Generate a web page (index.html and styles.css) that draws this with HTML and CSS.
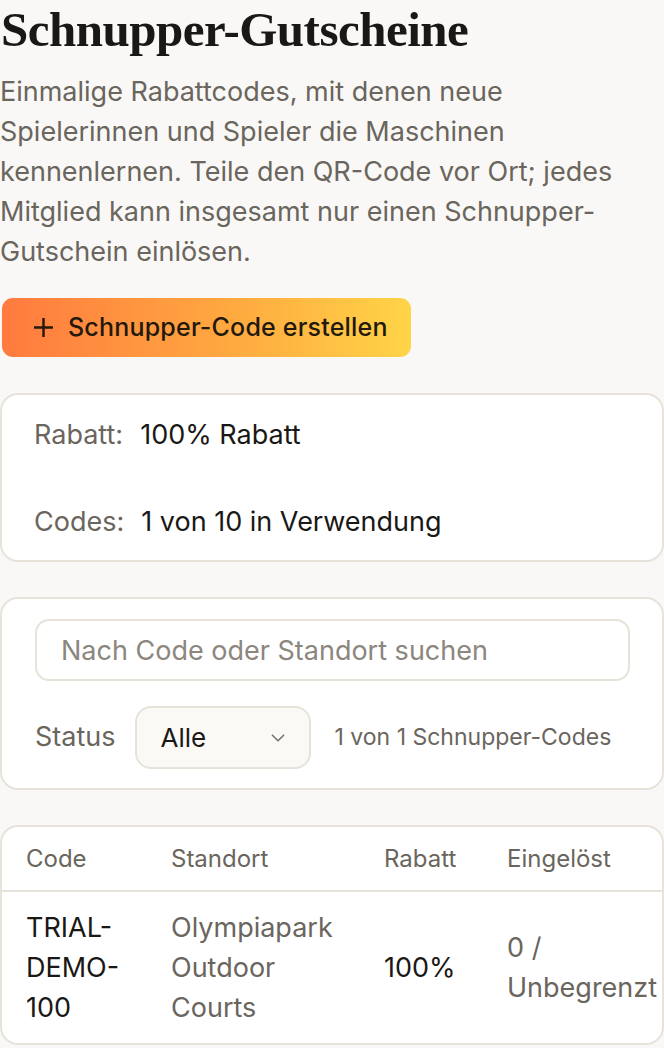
FILE: index.html
```html
<!DOCTYPE html>
<html lang="de">
  <head>
    <meta charset="UTF-8" />
    <meta name="viewport" content="width=device-width, initial-scale=1.0" />
    <title>Schnupper-Gutscheine</title>
    <link rel="stylesheet" href="styles.css">
  </head>
  <body>
    <main class="page">
      <header class="intro">
        <h1 class="intro__title">Schnupper-Gutscheine</h1>
        <p class="intro__text">
          Einmalige Rabattcodes, mit denen neue Spielerinnen und Spieler die Maschinen
          kennenlernen. Teile den QR-Code vor Ort; jedes Mitglied kann insgesamt nur einen
          Schnupper-Gutschein einlösen.
        </p>
      </header>

      <div class="actions">
        <button class="btn-create" type="button">
          <svg class="btn-create__icon" viewBox="0 0 20 20" width="21" height="21">
            <path d="M10 1v18M1 10h18" fill="none" stroke="currentColor" stroke-width="2.3" />
          </svg>
          Schnupper-Code erstellen
        </button>
      </div>

      <section class="card summary">
        <div class="summary__row">
          <span class="summary__label">Rabatt:</span>
          <span class="summary__value">100% Rabatt</span>
        </div>
        <div class="summary__row">
          <span class="summary__label">Codes:</span>
          <span class="summary__value">1 von 10 in Verwendung</span>
        </div>
      </section>

      <section class="card filters">
        <input class="filters__search" type="text" placeholder="Nach Code oder Standort suchen" />
        <div class="filters__row">
          <label class="filters__label" for="status">Status</label>
          <div class="select">
            <span class="select__value" id="status">Alle</span>
            <svg class="select__chevron" viewBox="0 0 16 16" width="18" height="18">
              <path d="M3 5.5l5 5 5-5" fill="none" stroke="currentColor" stroke-width="1.4" stroke-linecap="round" stroke-linejoin="round" />
            </svg>
          </div>
          <span class="filters__count">1 von 1 Schnupper-Codes</span>
        </div>
      </section>

      <section class="card table-card">
        <table class="codes">
          <thead>
            <tr>
              <th class="col-code">Code</th>
              <th class="col-place">Standort</th>
              <th class="col-rate">Rabatt</th>
              <th class="col-used">Eingelöst</th>
            </tr>
          </thead>
          <tbody>
            <tr>
              <td class="col-code codes__strong">TRIAL-DEMO-100</td>
              <td class="col-place">Olympiapark Outdoor Courts</td>
              <td class="col-rate codes__strong">100%</td>
              <td class="col-used">0 / Unbegrenzt</td>
            </tr>
          </tbody>
        </table>
      </section>
    </main>
  </body>
</html>
```

FILE: styles.css
```css
* {
  box-sizing: border-box;
  margin: 0;
  padding: 0;
}
:root {
  --bg: #f9f8f6;
  --card: #ffffff;
  --line: #e7e3db;
  --ink: #1a1815;
  --muted: #6a655d;
  --soft: #8b867e;
}
body {
  background: var(--bg);
  color: var(--ink);
  font: 27px/1.5 Inter, "Noto Sans", sans-serif;
}
.page {
  display: flex;
  flex-direction: column;
}
.intro__title {
  font: 700 49px/60px "Liberation Serif", "DejaVu Serif", serif;
  letter-spacing: -0.5px;
  padding-left: 1px;
}
.intro__text {
  margin-top: 12px;
  padding-right: 20px;
  color: var(--muted);
  font-size: 27px;
  line-height: 40px;
}
.actions {
  margin-top: 26px;
}
.btn-create {
  display: inline-flex;
  align-items: center;
  gap: 14px;
  width: 409px;
  height: 59px;
  margin-left: 2px;
  padding: 0 0 0 31px;
  border: 0;
  border-radius: 11px;
  background: linear-gradient(90deg, #ff7a3f 0%, #ffa840 55%, #ffd447 100%);
  color: #23180c;
  font: 500 25px/1 Inter, "Noto Sans", sans-serif;
  letter-spacing: 0.2px;
}
.btn-create__icon {
  flex: none;
}
.card {
  background: var(--card);
  border: 2px solid var(--line);
  border-radius: 18px;
}
.summary {
  margin-top: 36px;
  padding: 20px 32px 18px;
  display: flex;
  flex-direction: column;
  gap: 47px;
}
.summary__row {
  display: flex;
  gap: 17px;
  line-height: 40px;
}
.summary__label {
  color: var(--muted);
}
.summary__value {
  color: var(--ink);
}
.filters {
  margin-top: 35px;
  padding: 20px 32px 19px 33px;
  display: flex;
  flex-direction: column;
  gap: 25px;
}
.filters__search {
  width: 100%;
  height: 62px;
  padding: 0 24px;
  border: 2px solid var(--line);
  border-radius: 14px;
  background: var(--card);
  font: 27px Inter, "Noto Sans", sans-serif;
  color: var(--ink);
}
.filters__search::placeholder {
  color: var(--soft);
}
.filters__row {
  display: flex;
  align-items: center;
}
.filters__label {
  color: var(--muted);
  margin-right: 19px;
}
.select {
  display: flex;
  align-items: center;
  justify-content: space-between;
  width: 176px;
  height: 63px;
  padding: 0 22px 0 24px;
  border: 2px solid var(--line);
  border-radius: 16px;
  background: #faf9f6;
  margin-right: 24px;
}
.select__value {
  font-size: 26px;
  color: var(--ink);
}
.select__chevron {
  color: #77726b;
}
.filters__count {
  color: var(--muted);
  font-size: 23px;
}
.table-card {
  margin-top: 35px;
  overflow: hidden;
}
.codes {
  width: 100%;
  border-collapse: collapse;
}
.codes th,
.codes td {
  padding-right: 24px;
  text-align: left;
}
.codes th {
  height: 64px;
  font-weight: 400;
  font-size: 24px;
  color: var(--muted);
  border-bottom: 2px solid var(--line);
}
.codes td {
  padding-top: 16px;
  padding-bottom: 15px;
  color: var(--muted);
  line-height: 40px;
  vertical-align: middle;
}
.codes .codes__strong {
  color: var(--ink);
}
.codes .col-code {
  padding-left: 24px;
  width: 169px;
}
.codes .col-place {
  width: 213px;
}
.codes .col-rate {
  width: 123px;
}
.codes .col-used {
  padding-right: 4px;
}
```
